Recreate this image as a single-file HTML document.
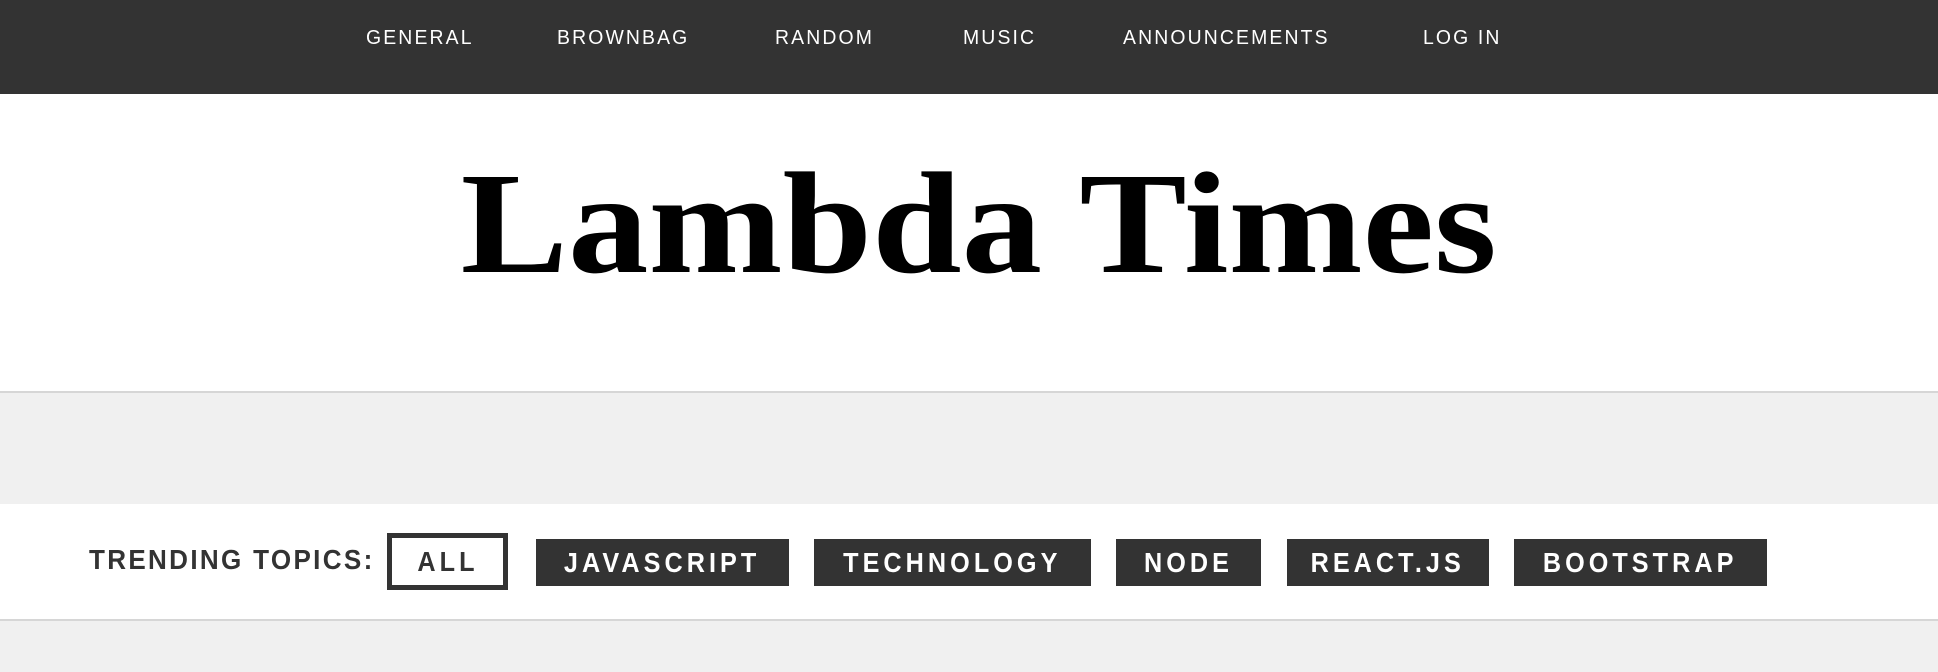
<!DOCTYPE html>
<html><head><style>
*{margin:0;padding:0;box-sizing:border-box}
body{width:1938px;height:672px;overflow:hidden;background:#f0f0f0;font-family:"Liberation Sans",sans-serif;position:relative}
.nav{position:absolute;left:0;top:0;width:1938px;height:94px;background:#333}
.nav span{position:absolute;top:26px;color:#fff;font-size:20px;letter-spacing:2.2px;line-height:24px;white-space:nowrap;transform:scaleX(0.97);transform-origin:left}
.head{position:absolute;left:0;top:94px;width:1938px;height:299px;background:#fff;border-bottom:2px solid #d6d6d6}
.title{position:absolute;left:10px;width:1938px;top:124px;text-align:center;font-family:"Liberation Serif",serif;font-weight:bold;font-size:145px;line-height:200px;letter-spacing:0px;color:#000}
.title span{display:inline-block;transform:scaleX(1.11)}
.band{position:absolute;left:0;top:504px;width:1938px;height:117px;background:#fff;border-bottom:2px solid #d6d6d6}
.lbl{position:absolute;left:89px;top:545px;font-weight:bold;font-size:28px;line-height:30px;color:#333;letter-spacing:2.5px;transform:scaleX(0.93);transform-origin:left;white-space:nowrap}
.tag{position:absolute;top:539px;height:47px;background:#333;color:#fff;font-weight:bold;font-size:28px;letter-spacing:4.5px;display:flex;align-items:center;justify-content:center}
.tag b{display:inline-block;transform:scaleX(0.9)}
.all{top:533px;height:57px;background:#fff;border:5px solid #333;color:#333}
</style></head><body>
<div class="nav">
<span style="left:366px">GENERAL</span>
<span style="left:557px">BROWNBAG</span>
<span style="left:775px">RANDOM</span>
<span style="left:963px">MUSIC</span>
<span style="left:1123px">ANNOUNCEMENTS</span>
<span style="left:1423px">LOG IN</span>
</div>
<div class="head"></div>
<div class="title"><span>Lambda Times</span></div>
<div class="band"></div>
<div class="lbl">TRENDING TOPICS:</div>
<div class="tag all" style="left:387px;width:121px"><b>ALL</b></div>
<div class="tag" style="left:536px;width:253px"><b>JAVASCRIPT</b></div>
<div class="tag" style="left:814px;width:277px"><b>TECHNOLOGY</b></div>
<div class="tag" style="left:1116px;width:145px"><b>NODE</b></div>
<div class="tag" style="left:1287px;width:202px"><b>REACT.JS</b></div>
<div class="tag" style="left:1514px;width:253px"><b>BOOTSTRAP</b></div>
</body></html>
